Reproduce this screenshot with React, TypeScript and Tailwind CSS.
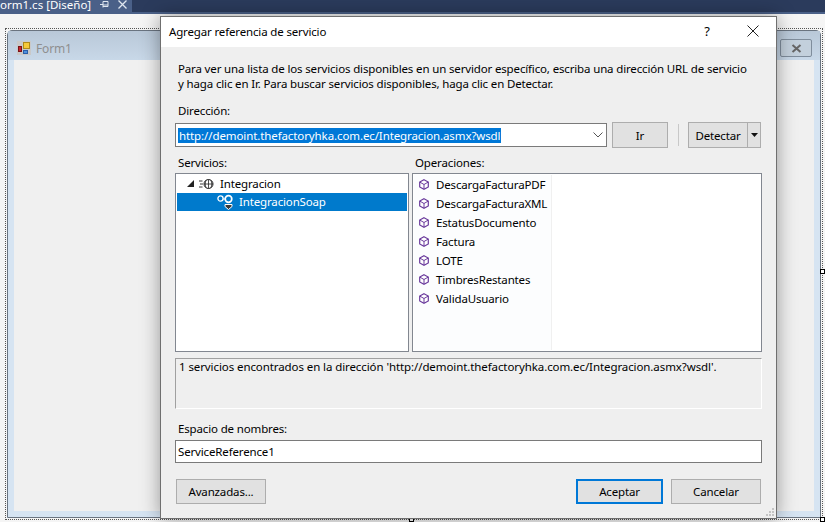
import React from "react";

const FONT = "font-['Noto_Sans','Open_Sans',sans-serif]";

const operations = [
  "DescargaFacturaPDF",
  "DescargaFacturaXML",
  "EstatusDocumento",
  "Factura",
  "LOTE",
  "TimbresRestantes",
  "ValidaUsuario",
];

const CubeIcon = () => (
  <svg width="10" height="11" viewBox="0 0 10 11" className="shrink-0">
    <path d="M5 .7 9.300 3v5L5 10.300.7 8V3Z" fill="#fff" stroke="#6a3a9c" strokeWidth="1.200" />
    <path d="M1 3.200 5 5.500l4-2.300M5 5.500V10" fill="none" stroke="#6a3a9c" strokeWidth="1" />
  </svg>
);

const GlobeIcon = () => (
  <svg width="15" height="12" viewBox="0 0 15 12">
    <path d="M0 3h3.500M1 6h3M0 9h3.500" stroke="#333" strokeWidth="1" />
    <circle cx="9.500" cy="6" r="4.500" fill="#fff" stroke="#222" />
    <path d="M5 6h9M9.500 1.500v9M7.300 2c-1.500 2.500-1.500 5.500 0 8M11.700 2c1.500 2.500 1.500 5.500 0 8" fill="none" stroke="#222" strokeWidth=".8" />
  </svg>
);

const SoapIcon = () => (
  <svg width="16" height="16" viewBox="0 0 16 16" className="shrink-0">
    <circle cx="3.500" cy="4.500" r="2.600" fill="none" stroke="#fff" strokeWidth="1.300" />
    <circle cx="11.500" cy="5" r="3.300" fill="none" stroke="#fff" strokeWidth="1.700" />
    <path d="M6 5h2.500" stroke="#fff" />
    <path d="M8 10.500h7v2L11.500 15.500 8 12.500Z" fill="#3a3a3a" stroke="#fff" />
  </svg>
);

const FormIcon = () => (
  <svg width="14" height="14" viewBox="0 0 14 14">
    <rect x="0" y="0" width="14" height="14" fill="#c9c9c9" />
    <rect x="6.500" y="1.500" width="6" height="6" fill="#f5c93a" stroke="#b08a1a" />
    <rect x="1.500" y="5.500" width="3" height="5" fill="#c8232a" stroke="#7a1216" />
    <rect x="6.500" y="9.500" width="4" height="3" fill="#4d90e0" stroke="#2a5fa8" />
  </svg>
);

const Handle = ({ className }: { className: string }) => (
  <div className={`absolute h-[5px] w-[5px] border border-black bg-white ${className}`} />
);

const Button = ({ label, className = "" }: { label: string; className?: string }) => (
  <button className={`h-[25px] border border-[#adadad] bg-[#e1e1e1] text-black ${className}`}>
    {label}
  </button>
);

export default function App() {
  return (
    <div className={`relative h-[522px] w-[825px] overflow-hidden bg-[#f5f5f5] text-[11.5px] leading-[15px] tracking-[-0.15px] text-black ${FONT}`}>
      {/* document tab strip */}
      <div className="flex h-[12px] bg-[#2b3b5c]">
        <div className="relative h-[14px] w-[132px] overflow-hidden bg-[#4a6088] text-white tracking-normal">
          <span className="absolute left-0 top-0 whitespace-nowrap leading-[9px]">orm1.cs [Diseño]</span>
          <svg width="10" height="9" viewBox="0 0 10 9" className="absolute left-[99px] top-[0px]">
            <path d="M1 4.500h3M4 1.500v6M4 1.500h5v5H4M4 5h5" fill="none" stroke="#dfe6f0" />
          </svg>
          <svg width="9" height="9" viewBox="0 0 9 9" className="absolute left-[118px] top-[0px]">
            <path d="M.5.500l8 8M8.500.500l-8 8" stroke="#dfe6f0" strokeWidth="1.300" />
          </svg>
        </div>
      </div>
      <div className="h-[2px] bg-[#4a6088]" />

      {/* form on the designer surface */}
      <div className="absolute left-[5px] top-[28px] h-[492px] w-[818px] border border-dotted border-[#555] p-[1px]">
        <div className="relative h-full rounded-t-[5px] border border-[#6a7480] bg-[#d6e4f2]">
          <div className="flex h-[29px] items-center gap-[5px] bg-gradient-to-b from-[#b9c8d8] to-[#c8d8e8] pl-[9px] pt-[5px] text-[12px] text-[#8f8f8f]">
            <FormIcon />
            <span>Form1</span>
          </div>
          <div className="absolute right-[8px] top-[8px] flex h-[18px] w-[32px] items-center justify-center rounded-[2px] border border-[#7f8d9c] bg-[#c3d0dc]">
            <svg width="11" height="9" viewBox="0 0 11 9">
              <path d="M1.500 1l8 7M9.500 1l-8 7" stroke="#666" strokeWidth="2" />
            </svg>
          </div>
          <div className="absolute bottom-[6px] left-[6px] right-[6px] top-[29px] bg-[#f0f0f0]" />
        </div>
        <Handle className="right-[-3px] top-[240px]" />
        <Handle className="bottom-[-3px] left-[403px]" />
        <Handle className="bottom-[-3px] right-[-3px]" />
      </div>

      {/* dialog */}
      <div className="absolute left-[160px] top-[16px] flex h-[503px] w-[617px] flex-col border border-[#6f6f6f] bg-[#efefef] shadow-[0_0_18px_rgba(0,0,0,0.38)]">
        <div className="flex h-[30px] items-center justify-between bg-white pb-[2px] pl-[8px]">
          <span>Agregar referencia de servicio</span>
          <div className="flex items-center">
            <span className="w-[46px] text-center text-[13px]">?</span>
            <span className="flex w-[46px] justify-center">
              <svg width="12" height="12" viewBox="0 0 12 12">
                <path d="M.5.5l11 11M11.500.5l-11 11" stroke="#222" strokeWidth="1" />
              </svg>
            </span>
          </div>
        </div>

        <div className="flex flex-1 flex-col px-[14px]">
          <p className="mt-[14px] whitespace-nowrap pl-[3px]">
            Para ver una lista de los servicios disponibles en un servidor específico, escriba una dirección URL de servicio
            <br />y haga clic en Ir. Para buscar servicios disponibles, haga clic en Detectar.
          </p>

          <label className="mt-[12px] pl-[3px]">Dirección:</label>
          <div className="mt-[4px] flex h-[26px] items-center">
            <div className="flex h-[24px] w-[432px] items-center border border-[#7a7a7a] bg-white pl-[2px]">
              <span className="whitespace-nowrap bg-[#0078d7] px-[1px] tracking-[-0.1px] text-white">http://demoint.thefactoryhka.com.ec/Integracion.asmx?wsdl</span>
              <svg width="10" height="6" viewBox="0 0 10 6" className="ml-auto mr-[3px]">
                <path d="M.5.5 5 5 9.500.5" fill="none" stroke="#555" />
              </svg>
            </div>
            <Button label="Ir" className="ml-[5px] !h-[26px] w-[56px]" />
            <div className="ml-[10px] h-[22px] w-[1px] bg-[#c8c8c8]" />
            <div className="ml-[9px] flex h-[26px] w-[73px] items-center border border-[#adadad] bg-[#e1e1e1]">
              <span className="w-[58px] text-center">Detectar</span>
              <span className="flex h-full flex-1 items-center justify-center border-l border-[#adadad]">
                <svg width="7" height="4" viewBox="0 0 7 4"><path d="M0 0h7L3.500 4Z" fill="#111" /></svg>
              </span>
            </div>
          </div>

          <div className="mt-[7px] flex">
            <span className="w-[240px] pl-[3px]">Servicios:</span>
            <span>Operaciones:</span>
          </div>
          <div className="mt-[3px] flex h-[179px] gap-[3px]">
            <div className="w-[234px] border border-[#828790] bg-white p-[1px]">
              <div className="flex h-[18px] items-center pb-[1px]">
                <svg width="7" height="7" viewBox="0 0 7 7" className="ml-[10px]"><path d="M7 0v7H0Z" fill="#222" /></svg>
                <span className="ml-[5px]"><GlobeIcon /></span>
                <span className="ml-[6px]">Integracion</span>
              </div>
              <div className="flex h-[18px] items-center bg-[#007acc] pl-[40px] text-white">
                <SoapIcon />
                <span className="mb-[1px] ml-[6px]">IntegracionSoap</span>
              </div>
            </div>
            <div className="w-[350px] border border-[#828790] bg-white p-[1px]">
              <div className="h-full w-[138px] border-r border-[#f0f0f0] bg-[#fcfdfe] pl-[5px]">
                {operations.map((op) => (
                  <div key={op} className="flex h-[19px] items-center gap-[7px] whitespace-nowrap">
                    <CubeIcon />
                    <span>{op}</span>
                  </div>
                ))}
              </div>
            </div>
          </div>

          <div className="mt-[6px] h-[51px] border border-[#a0a0a0] border-b-white border-r-white pl-[3px] tracking-[-0.09px]">
            1 servicios encontrados en la dirección 'http://demoint.thefactoryhka.com.ec/Integracion.asmx?wsdl'.
          </div>

          <label className="mt-[12px] pl-[3px]">Espacio de nombres:</label>
          <div className="mt-[4px] flex h-[23px] items-center border border-[#7a7a7a] bg-white pb-[1px] pl-[2px]">ServiceReference1</div>

          <div className="mt-[16px] flex pl-[1px]">
            <Button label="Avanzadas..." className="w-[90px]" />
            <Button label="Aceptar" className="ml-auto w-[87px] !border-2 !border-[#0078d7]" />
            <Button label="Cancelar" className="ml-[8px] mr-[1px] w-[90px]" />
          </div>
        </div>

        {/* resize grip */}
        <svg width="9" height="9" viewBox="0 0 9 9" className="absolute bottom-[1px] right-[1px]">
          <path d="M6 0h2v2H6ZM3 3h2v2H3ZM6 3h2v2H6ZM0 6h2v2H0ZM3 6h2v2H3ZM6 6h2v2H6Z" fill="#c4c4c4" />
        </svg>
      </div>
    </div>
  );
}
